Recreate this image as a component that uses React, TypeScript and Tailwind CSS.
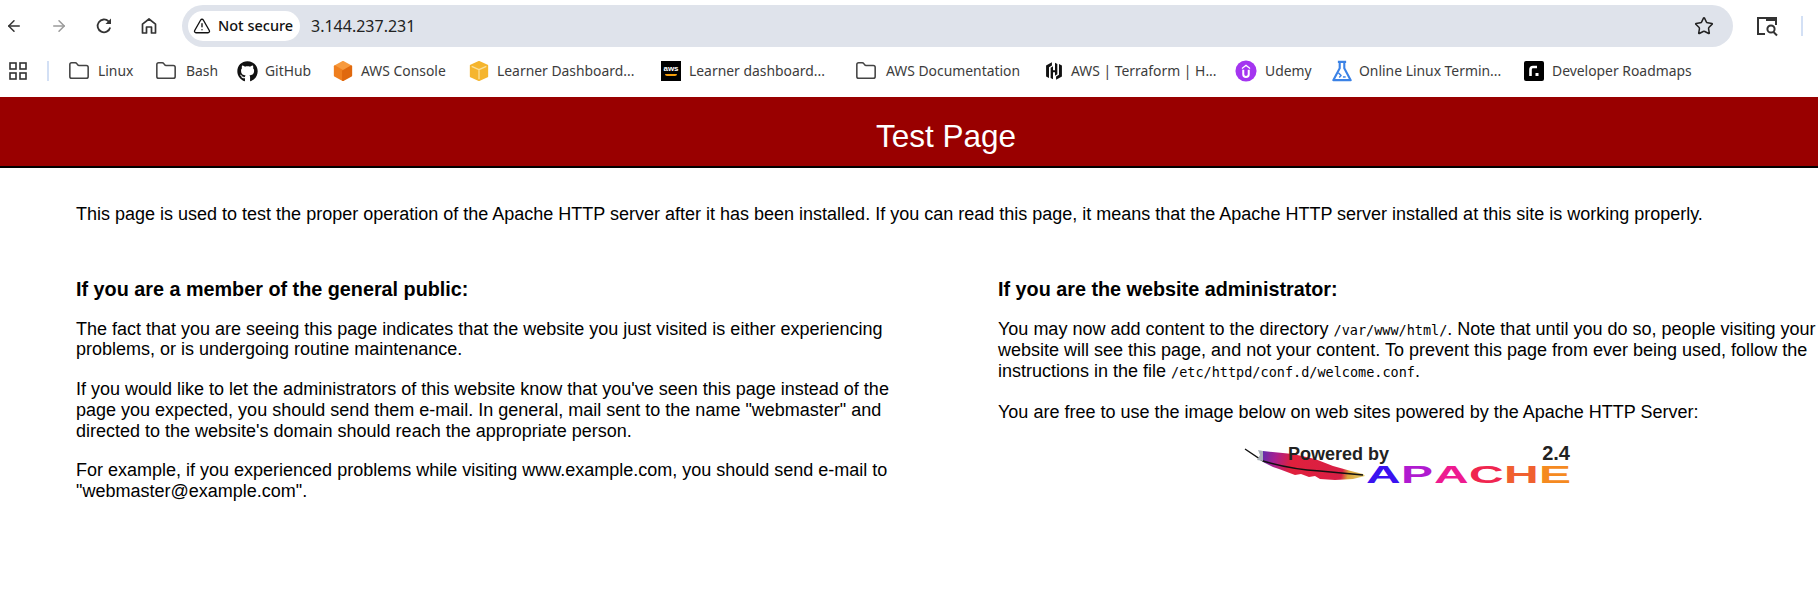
import { ArrowLeft, ArrowRight, TriangleAlert, Star, Folder } from "lucide-react"
import { FaGithub } from "react-icons/fa"
import type { ReactNode } from "react"

const chromeFont = "font-['Noto_Sans',sans-serif]"

function ReloadIcon() {
  return (
    <svg viewBox="0 0 18 18" className="w-[18px] h-[18px]" fill="none" stroke="#333" strokeWidth="1.8">
      <path d="M15.2 10.5 A6.4 6.4 0 1 1 13.6 4.4 L15.4 6.2" />
      <path d="M16 1.5 V7 H10.5 Z" fill="#333" stroke="none" />
    </svg>
  )
}

function HomeIcon() {
  return (
    <svg viewBox="0 0 18 18" className="w-[18px] h-[18px]" fill="none" stroke="#333" strokeWidth="1.7" strokeLinejoin="round">
      <path d="M2.5 16 V7.2 L9 2 L15.5 7.2 V16 H11.5 V10 H6.5 V16 Z" />
    </svg>
  )
}

function AwsCube() {
  return (
    <svg viewBox="0 0 24 24" className="w-[22px] h-[22px] shrink-0" strokeLinejoin="round">
      <path d="M12 2 L21 7 L12 12 L3 7 Z" fill="#f79a3e" stroke="#f79a3e" strokeWidth="2" />
      <path d="M3 7 L12 12 V22 L3 17 Z" fill="#ef7f1f" stroke="#ef7f1f" strokeWidth="2" />
      <path d="M21 7 L12 12 V22 L21 17 Z" fill="#e0690f" stroke="#e0690f" strokeWidth="2" />
    </svg>
  )
}

function BoxIcon() {
  return (
    <svg viewBox="0 0 24 24" className="w-[22px] h-[22px] shrink-0" strokeLinejoin="round">
      <path d="M12 2 L21 6 V18 L12 22 L3 18 V6 Z" fill="#f5b52e" stroke="#f5b52e" strokeWidth="2" />
      <path d="M4 7 L12 10.5 L20 7 M12 10.5 V21" fill="none" stroke="#fbe09a" strokeWidth="1.4" />
    </svg>
  )
}

function AwsIcon() {
  return (
    <div className="w-5 h-5 shrink-0 bg-black flex flex-col items-center justify-center">
      <span className="text-white text-[8px] leading-[8px] font-bold font-['Liberation_Sans',sans-serif]">aws</span>
      <span className="w-3 h-[2px] mt-[1px] rounded-b-full bg-[#f59e0b]" />
    </div>
  )
}

function HashiIcon() {
  return (
    <svg viewBox="0 0 24 24" className="w-5 h-5 shrink-0" fill="#111">
      <path d="M9.5 1.5 L2.5 5.5 V18.5 L6 20.5 V7.5 L9.5 5.5 Z" />
      <path d="M14.5 22.5 L21.5 18.5 V5.5 L18 3.5 V16.5 L14.5 18.5 Z" />
      <path d="M8 8 L10.8 6.4 V11 H13.2 V2 L16 3.6 V16 L13.2 17.6 V13.6 H10.8 V22 L8 20.4 Z" />
    </svg>
  )
}

function UdemyIcon() {
  return (
    <svg viewBox="0 0 24 24" className="w-[22px] h-[22px] shrink-0">
      <circle cx="12" cy="12" r="11.5" fill="#a435f0" />
      <path d="M7.5 8.5 L12 5 L16.5 8.5 V10 L12 6.8 L7.5 10 Z" fill="#fff" />
      <path d="M9 10.5 V15.5 a3 3 0 0 0 6 0 V10.5" fill="none" stroke="#fff" strokeWidth="2.2" />
    </svg>
  )
}

function FlaskIcon() {
  return (
    <svg viewBox="0 0 24 24" className="w-[22px] h-[22px] shrink-0" fill="none" stroke="#3b82e6" strokeWidth="2.3" strokeLinejoin="round">
      <path d="M7.5 2 H16.5 M9.5 2 V9 L2.5 22 H21.5 L14.5 9 V2" />
      <path d="M8 14 L11 17 L9 19" strokeWidth="1.6" />
      <path d="M13 18.5 H16" strokeWidth="1.6" />
    </svg>
  )
}

function RoadmapIcon() {
  return (
    <div className="w-5 h-5 shrink-0 bg-black rounded-[2px] flex items-center justify-center">
      <svg viewBox="0 0 20 20" className="w-5 h-5">
        <path d="M6.5 15 V8.5 a2.5 2.5 0 0 1 2.5 -2.5 H13" fill="none" stroke="#fff" strokeWidth="2.6" />
        <rect x="11.5" y="12" width="3" height="3" fill="#fff" />
      </svg>
    </div>
  )
}

function FolderIcon() {
  return <Folder className="w-[22px] h-[22px] shrink-0 text-[#444]" strokeWidth={1.7} />
}

function AppsIcon() {
  return (
    <svg viewBox="0 0 18 18" className="w-[18px] h-[18px]" fill="none" stroke="#333" strokeWidth="1.6">
      <rect x="1" y="1" width="6" height="6" />
      <rect x="11" y="1" width="6" height="6" />
      <rect x="1" y="11" width="6" height="6" />
      <rect x="11" y="11" width="6" height="6" />
    </svg>
  )
}

const bookmarks: { label: string; icon: ReactNode; width: string; gap: string }[] = [
  { label: "Linux", icon: <FolderIcon />, width: "w-[87px]", gap: "gap-2" },
  { label: "Bash", icon: <FolderIcon />, width: "w-[82px]", gap: "gap-[9px]" },
  { label: "GitHub", icon: <FaGithub className="w-[21px] h-[21px] shrink-0 text-[#111]" />, width: "w-[95px]", gap: "gap-[7px]" },
  { label: "AWS Console", icon: <AwsCube />, width: "w-[136px]", gap: "gap-[7px]" },
  { label: "Learner Dashboard...", icon: <BoxIcon />, width: "w-[193px]", gap: "gap-[7px]" },
  { label: "Learner dashboard...", icon: <AwsIcon />, width: "w-[194px]", gap: "gap-2" },
  { label: "AWS Documentation", icon: <FolderIcon />, width: "w-[189px]", gap: "gap-[9px]" },
  { label: "AWS | Terraform | H...", icon: <HashiIcon />, width: "w-[191px]", gap: "gap-[7px]" },
  { label: "Udemy", icon: <UdemyIcon />, width: "w-[96px]", gap: "gap-2" },
  { label: "Online Linux Termin...", icon: <FlaskIcon />, width: "w-[193px]", gap: "gap-[6px]" },
  { label: "Developer Roadmaps", icon: <RoadmapIcon />, width: "w-[180px]", gap: "gap-2" },
]

function TabSearchIcon() {
  return (
    <svg viewBox="0 0 24 24" className="w-[24px] h-[24px]" fill="none" stroke="#333" strokeWidth="2">
      <path d="M10 20 H3 V4 H21 V11" />
      <rect x="11" y="3" width="11" height="4" fill="#333" stroke="none" />
      <circle cx="16" cy="15" r="3.6" />
      <path d="M18.5 18 L22 21.5" />
    </svg>
  )
}

function ApacheLogo() {
  const letters = [
    { c: "A", color: "text-[#3a12f0]", pos: "left-[123px]" },
    { c: "P", color: "text-[#b01ad0]", pos: "left-[158px]" },
    { c: "A", color: "text-[#ee1a90]", pos: "left-[191px]" },
    { c: "C", color: "text-[#f0254f]", pos: "left-[226px]" },
    { c: "H", color: "text-[#f06030]", pos: "left-[261px]" },
    { c: "E", color: "text-[#f58a20]", pos: "left-[296px]" },
  ]
  return (
    <div className="relative w-[330px] h-[44px] font-['Liberation_Sans',sans-serif]">
      <svg viewBox="0 0 125 36" className="absolute left-0 top-[2px] w-[125px] h-[36px]">
        <defs>
          <linearGradient id="feather" gradientUnits="userSpaceOnUse" x1="18" y1="6" x2="122" y2="30">
            <stop offset="0" stopColor="#5a2fb0" />
            <stop offset="0.14" stopColor="#a8208f" />
            <stop offset="0.3" stopColor="#e0203c" />
            <stop offset="0.78" stopColor="#d81f45" />
            <stop offset="0.84" stopColor="#d9a23a" />
            <stop offset="1" stopColor="#e6d070" />
          </linearGradient>
        </defs>
        <path d="M20 4 L50 7 L72 12 L90 19 L108 24 L120 27 L122 29 L110 32 L92 33 L77 32 L72 29 L66 30 L58 27 L52 28 L44 25 L36 22 L30 20 L20 15 Z" fill="url(#feather)" />
        <path d="M2 2 L20 14 C40 20 60 23 77 24 L120 28" fill="none" stroke="#111" strokeWidth="1.4" />
        <path d="M15 3 L20 4 L20 14 L14 13 L17 8 Z" fill="#aab2ba" />
      </svg>
      <span className="absolute left-[45px] top-[-2px] text-[18px] leading-[22px] font-bold text-[#222]">Powered by</span>
      <span className="absolute right-[3px] top-[-3px] text-[20px] leading-[22px] font-bold text-[#222]">2.4</span>
      {letters.map((l, i) => (
        <span key={i} className={`absolute top-[16px] text-[24px] leading-[27px] font-bold scale-x-[2] origin-left ${l.color} ${l.pos}`}>
          {l.c}
        </span>
      ))}
    </div>
  )
}

export default function App() {
  return (
    <div className="w-full h-[597px] overflow-hidden bg-white">
      <div className={`h-[97px] ${chromeFont}`}>
        {/* toolbar */}
        <div className="h-[52px] flex items-center">
          <div className="w-[182px] flex items-center pl-[5px] gap-[27px] text-[#333]">
            <ArrowLeft className="w-[18px] h-[18px]" strokeWidth={2} />
            <ArrowRight className="w-[18px] h-[18px] text-[#9a9a9a]" strokeWidth={2} />
            <ReloadIcon />
            <HomeIcon />
          </div>
          <div className="w-[1551px] h-[42px] rounded-full bg-[#dfe3eb] flex items-center pl-[6px] pr-[19px]">
            <div className="w-[112px] h-[30px] rounded-full bg-white flex items-center pl-[5px] gap-[7px] text-[#111]">
              <TriangleAlert className="w-[18px] h-[18px]" strokeWidth={1.8} />
              <span className="text-[14.5px] font-medium whitespace-nowrap">Not secure</span>
            </div>
            <span className="ml-[11px] text-[16px] text-[#222]">3.144.237.231</span>
            <Star className="ml-auto w-5 h-5 text-[#222]" strokeWidth={1.8} />
          </div>
          <div className="ml-[22px] flex items-center">
            <TabSearchIcon />
            <div className="ml-[22px] w-[2px] h-5 bg-[#d3e0f5]" />
          </div>
        </div>
        {/* bookmarks bar */}
        <div className="h-[38px] flex items-center text-[#3c3c3c] text-[13.9px] whitespace-nowrap">
          <div className="pl-[9px] w-[47px]">
            <AppsIcon />
          </div>
          <div className="w-[2px] h-5 bg-[#d3e0f5]" />
          <div className="flex items-center pl-[19px]">
            {bookmarks.map((b) => (
              <div key={b.label} className={`flex items-center ${b.width} ${b.gap}`}>
                {b.icon}
                <span>{b.label}</span>
              </div>
            ))}
          </div>
        </div>
      </div>

      <div className="font-['Liberation_Sans',sans-serif] text-black text-[18px] leading-[20.7px]">
        {/* the page is wider than the window, so the title sits right of centre */}
        <h1 className="w-[1892px] h-[71px] pt-[9px] bg-[#990000] border-b-2 border-black flex items-center justify-center text-white text-[31.5px] font-normal">
          Test Page
        </h1>
        <p className="mt-[36px] pl-[76px] whitespace-nowrap">
          This page is used to test the proper operation of the Apache HTTP server after it has been installed. If you can read this page, it means that the Apache HTTP server installed at this site is working properly.
        </p>
        <div className="mt-[53px] flex pl-[76px]">
          <div className="w-[922px] shrink-0">
            <h2 className="text-[19.8px] leading-[23px] font-bold">If you are a member of the general public:</h2>
            <p className="mt-[18px] w-[820px]">
              The fact that you are seeing this page indicates that the website you just visited is either experiencing problems, or is undergoing routine maintenance.
            </p>
            <p className="mt-[19px] w-[820px]">
              If you would like to let the administrators of this website know that you've seen this page instead of the page you expected, you should send them e-mail. In general, mail sent to the name "webmaster" and directed to the website's domain should reach the appropriate person.
            </p>
            <p className="mt-[19px] w-[820px]">
              For example, if you experienced problems while visiting www.example.com, you should send e-mail to "webmaster@example.com".
            </p>
          </div>
          <div className="w-[840px] shrink-0">
            <h2 className="text-[19.8px] leading-[23px] font-bold">If you are the website administrator:</h2>
            <p className="mt-[18px]">
              You may now add content to the directory <code className="font-['DejaVu_Sans_Mono',monospace] text-[13.5px]">/var/www/html/</code>. Note that until you do so, people visiting your website will see this page, and not your content. To prevent this page from ever being used, follow the instructions in the file <code className="font-['DejaVu_Sans_Mono',monospace] text-[13.5px]">/etc/httpd/conf.d/welcome.conf</code>.
            </p>
            <p className="mt-[19px]">You are free to use the image below on web sites powered by the Apache HTTP Server:</p>
            <div className="mt-[22px] pl-[245px]">
              <ApacheLogo />
            </div>
          </div>
        </div>
      </div>
    </div>
  )
}
